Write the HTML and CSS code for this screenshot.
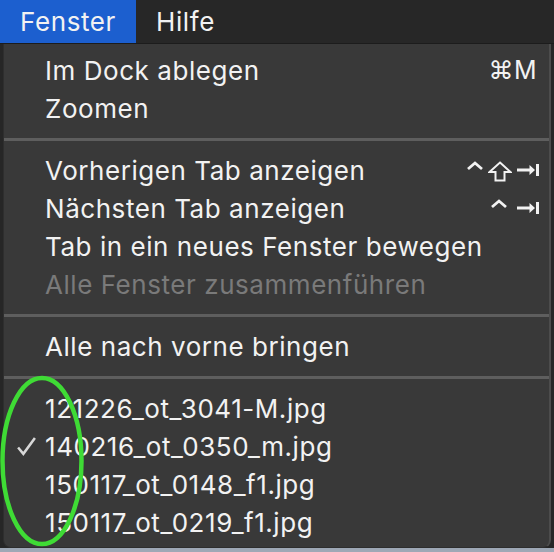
FILE: index.html
```html
<!DOCTYPE html>
<html lang="de">
<head>
<meta charset="utf-8">
<link rel="stylesheet" href="styles.css">
</head>
<body>
<div class="screen">
  <div class="menubar">
    <div class="mb-item active">Fenster</div>
    <div class="mb-item">Hilfe</div>
  </div>
  <div class="menu">
    <div class="row"><span class="label">Im Dock ablegen</span><span class="key">⌘M</span></div>
    <div class="row"><span class="label">Zoomen</span></div>
    <div class="sep"></div>
    <div class="row"><span class="label">Vorherigen Tab anzeigen</span>
      <span class="keys">
        <svg class="caret" viewBox="0 0 18 10"><polyline points="2,8 9,2 16,8"/></svg>
        <svg class="shift" viewBox="0 0 24 21"><path d="M12 1.5 L22.5 11 L16.5 11 L16.5 19.5 L7.5 19.5 L7.5 11 L1.5 11 Z"/></svg>
        <svg class="tab" viewBox="0 0 24 12"><path class="fill" d="M1 4.6 H13.5 V1 L19 6 L13.5 11 V7.4 H1 Z"/><rect class="fill" x="20" y="0" width="3" height="12"/></svg>
      </span></div>
    <div class="row"><span class="label">Nächsten Tab anzeigen</span>
      <span class="keys">
        <svg class="caret" viewBox="0 0 18 10"><polyline points="2,8 9,2 16,8"/></svg>
        <svg class="tab gap" viewBox="0 0 24 12"><path class="fill" d="M1 4.6 H13.5 V1 L19 6 L13.5 11 V7.4 H1 Z"/><rect class="fill" x="20" y="0" width="3" height="12"/></svg>
      </span></div>
    <div class="row"><span class="label">Tab in ein neues Fenster bewegen</span></div>
    <div class="row disabled"><span class="label">Alle Fenster zusammenführen</span></div>
    <div class="sep"></div>
    <div class="row"><span class="label">Alle nach vorne bringen</span></div>
    <div class="sep"></div>
    <div class="row"><span class="label">121226_ot_3041-M.jpg</span></div>
    <div class="row"><svg class="check" viewBox="0 0 20 20"><polyline points="2,11 7,17 18,2"/></svg><span class="label">140216_ot_0350_m.jpg</span></div>
    <div class="row"><span class="label">150117_ot_0148_f1.jpg</span></div>
    <div class="row"><span class="label">150117_ot_0219_f1.jpg</span></div>
  </div>
  <svg class="ring" viewBox="0 0 90 180"><ellipse cx="42" cy="89" rx="39.5" ry="83"/></svg>
</div>
</body>
</html>
```
FILE: styles.css
```css
* { box-sizing: border-box; }
html, body { margin: 0; padding: 0; }
body {
  width: 554px;
  height: 552px;
  overflow: hidden;
  background: #9ea8b6;
  font-family: Inter, "Noto Sans", "DejaVu Sans", sans-serif;
  color: #f2f2f2;
}
.screen {
  position: relative;
  width: 554px;
  height: 552px;
  background: linear-gradient(to bottom, #262626 0, #262626 548px, #9ea8b6 548px);
}
.menubar {
  display: flex;
  height: 44px;
  background: #272727;
  border-bottom: 1px solid #1c1c1c;
}
.mb-item {
  display: flex;
  align-items: center;
  padding: 0 18px 0 20px;
  font-size: 26px;
  letter-spacing: 0.6px;
  height: 43px;
}
.mb-item.active {
  background: #1c5fcf;
  width: 136px;
}
.menu {
  margin-left: 3px;
  width: 548px;
  height: 504px;
  background: #393939;
  border-right: 2px solid #4c4c4c;
  border-left: 1px solid #2e2e2e;
  border-bottom: 1px solid #2e2e2e;
  border-radius: 0 0 8px 8px;
  padding: 7px 0 6px;
}
.row {
  position: relative;
  display: flex;
  align-items: center;
  justify-content: space-between;
  height: 38px;
  padding: 0 9px 0 41px;
  font-size: 26px;
  letter-spacing: 0.55px;
}
.row.disabled { color: #7a7a7a; }
.key { font-size: 25px; letter-spacing: 0.5px; margin-right: 3px; }
.keys { display: flex; align-items: center; }
.caret { width: 18px; height: 10px; margin-bottom: 8px; fill: none; stroke: #f2f2f2; stroke-width: 2.8; }
.shift { width: 24px; height: 21px; margin-left: 4px; margin-top: 2px; fill: none; stroke: #f2f2f2; stroke-width: 2; }
.tab { width: 24px; height: 12px; margin-left: 4px; }
.tab.gap { margin-left: 8px; }
.fill { fill: #f2f2f2; }
.check {
  position: absolute;
  left: 12px;
  top: 9px;
  width: 21px;
  height: 21px;
  fill: none;
  stroke: #d8d8d8;
  stroke-width: 2.4;
}
.sep {
  height: 24px;
  display: flex;
  align-items: center;
}
.sep::before {
  content: "";
  display: block;
  width: 100%;
  height: 3px;
  background: #5e5e5e;
}
.ring {
  position: absolute;
  left: 0;
  top: 372px;
  width: 90px;
  height: 180px;
  fill: none;
  stroke: #3fdb35;
  stroke-width: 4.5;
}
```
